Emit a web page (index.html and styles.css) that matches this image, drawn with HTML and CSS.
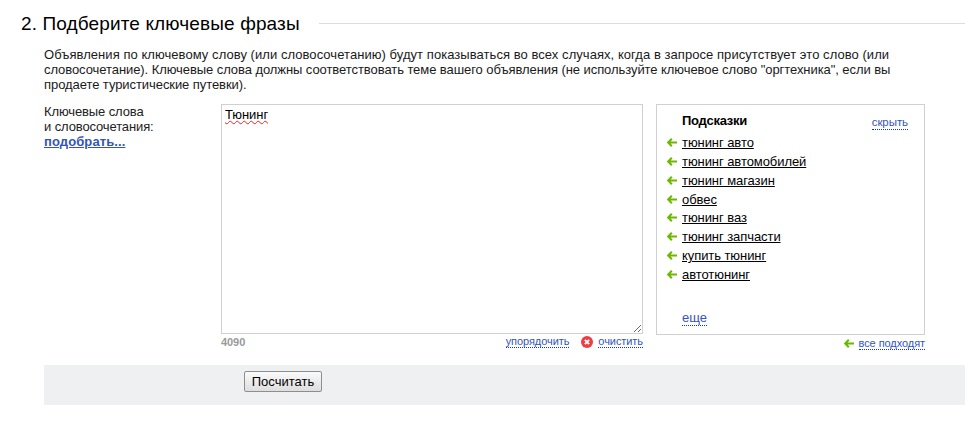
FILE: index.html
```html
<!DOCTYPE html>
<html lang="ru">
<head>
<meta charset="utf-8">
<title>Подберите ключевые фразы</title>
<link rel="stylesheet" href="styles.css">
</head>
<body>
<section class="step">
  <header class="step-head">
    <h2 class="step-title">2. Подберите ключевые фразы</h2>
    <div class="step-rule"></div>
  </header>
  <p class="step-desc"><span class="line-wide">Объявления по ключевому слову (или словосочетанию) будут показываться во всех случаях, когда в запросе присутствует это слово (или</span><br>словосочетание). Ключевые слова должны соответствовать теме вашего объявления (не используйте ключевое слово "оргтехника", если вы<br>продаете туристические путевки).</p>
  <div class="form-row">
    <div class="kw-label">Ключевые слова<br>и словосочетания:<br><a class="pick" href="#">подобрать...</a></div>
    <div class="kw-col">
      <div class="kw-input" contenteditable="true" spellcheck="false"><span class="misspelled">Тюнинг</span></div>
      <div class="kw-foot">
        <span class="counter">4090</span>
        <span class="kw-actions">
          <a class="dotted" href="#">упорядочить</a>
          <svg class="clear-icon" viewBox="0 0 12 12" width="12" height="12" aria-hidden="true"><circle cx="6" cy="6" r="6" fill="#ee3d43"/><path d="M3.9 3.9l4.2 4.2M8.1 3.9l-4.2 4.2" stroke="#fff" stroke-width="2" fill="none"/></svg>
          <a class="dotted" href="#">очистить</a>
        </span>
      </div>
    </div>
    <div class="hint-col">
      <aside class="hints">
        <div class="hints-head"><b class="hints-title">Подсказки</b><a class="dotted" href="#">скрыть</a></div>
        <ul class="hint-list">
          <li><svg class="arrow" viewBox="0 0 10 9" width="10" height="9" aria-hidden="true"><path d="M4.8 .7L1.2 4.5l3.6 3.8M1.5 4.5H10" stroke="#6cb800" stroke-width="2" fill="none"/></svg><a href="#">тюнинг авто</a></li>
          <li><svg class="arrow" viewBox="0 0 10 9" width="10" height="9" aria-hidden="true"><path d="M4.8 .7L1.2 4.5l3.6 3.8M1.5 4.5H10" stroke="#6cb800" stroke-width="2" fill="none"/></svg><a href="#">тюнинг автомобилей</a></li>
          <li><svg class="arrow" viewBox="0 0 10 9" width="10" height="9" aria-hidden="true"><path d="M4.8 .7L1.2 4.5l3.6 3.8M1.5 4.5H10" stroke="#6cb800" stroke-width="2" fill="none"/></svg><a href="#">тюнинг магазин</a></li>
          <li><svg class="arrow" viewBox="0 0 10 9" width="10" height="9" aria-hidden="true"><path d="M4.8 .7L1.2 4.5l3.6 3.8M1.5 4.5H10" stroke="#6cb800" stroke-width="2" fill="none"/></svg><a href="#">обвес</a></li>
          <li><svg class="arrow" viewBox="0 0 10 9" width="10" height="9" aria-hidden="true"><path d="M4.8 .7L1.2 4.5l3.6 3.8M1.5 4.5H10" stroke="#6cb800" stroke-width="2" fill="none"/></svg><a href="#">тюнинг ваз</a></li>
          <li><svg class="arrow" viewBox="0 0 10 9" width="10" height="9" aria-hidden="true"><path d="M4.8 .7L1.2 4.5l3.6 3.8M1.5 4.5H10" stroke="#6cb800" stroke-width="2" fill="none"/></svg><a href="#">тюнинг запчасти</a></li>
          <li><svg class="arrow" viewBox="0 0 10 9" width="10" height="9" aria-hidden="true"><path d="M4.8 .7L1.2 4.5l3.6 3.8M1.5 4.5H10" stroke="#6cb800" stroke-width="2" fill="none"/></svg><a href="#">купить тюнинг</a></li>
          <li><svg class="arrow" viewBox="0 0 10 9" width="10" height="9" aria-hidden="true"><path d="M4.8 .7L1.2 4.5l3.6 3.8M1.5 4.5H10" stroke="#6cb800" stroke-width="2" fill="none"/></svg><a href="#">автотюнинг</a></li>
        </ul>
        <a class="dotted more" href="#">еще</a>
      </aside>
      <div class="hint-foot">
        <svg class="arrow" viewBox="0 0 10 9" width="10" height="9" aria-hidden="true"><path d="M4.8 .7L1.2 4.5l3.6 3.8M1.5 4.5H10" stroke="#6cb800" stroke-width="2" fill="none"/></svg>
        <a class="dotted" href="#">все подходят</a>
      </div>
    </div>
  </div>
  <div class="submit-bar"><button class="calc" type="button">Посчитать</button></div>
</section>
</body>
</html>
```
FILE: styles.css
```css
html, body {
  margin: 0;
  padding: 0;
  background: #fff;
}
body {
  font-family: "Liberation Sans", Arial, sans-serif;
  font-size: 13px;
  line-height: 15px;
  letter-spacing: -0.07px;
  color: #000;
  overflow: hidden;
}
a { color: inherit; }
.step { padding-top: 13px; }
.step-head {
  display: flex;
  align-items: center;
  gap: 19px;
  padding-left: 21px;
  height: 21px;
}
.step-title {
  margin: 0;
  font-size: 19px;
  line-height: 21px;
  font-weight: normal;
  letter-spacing: 0.13px;
  white-space: nowrap;
}
.step-rule {
  flex: 1;
  height: 1px;
  background: #dcdcdc;
}
.step-desc {
  margin: 13px 0 0 44px;
  color: #1a1a1a;
  white-space: nowrap;
}
.line-wide { letter-spacing: 0.055px; }
.form-row {
  display: flex;
  margin: 12px 0 0 44px;
}
.kw-label {
  width: 177px;
  color: #222;
  letter-spacing: -0.12px;
}
.pick {
  color: #3355bb;
  font-weight: bold;
  letter-spacing: 0.1px;
}
.kw-col { width: 422px; }
.kw-input {
  box-sizing: border-box;
  width: 422px;
  height: 230px;
  padding: 2px 3px;
  border: 1px solid #d0d0d0;
  font-size: 13px;
  line-height: 15px;
  outline: none;
  resize: both;
  overflow: auto;
}
.misspelled {
  text-decoration: underline wavy #ee2222 1px;
  text-underline-offset: 1px;
}
.kw-foot {
  display: flex;
  justify-content: space-between;
  height: 15px;
  font-size: 11px;
  line-height: 13px;
  padding-top: 1px;
}
.counter {
  color: #999;
  font-weight: bold;
  padding-top: 1px;
}
.kw-actions {
  display: flex;
  align-items: flex-start;
}
.clear-icon { margin: 1px 5px 0 12px; }
.dotted {
  color: #3355bb;
  text-decoration: none;
  border-bottom: 1px dotted #1133cc;
}
.kw-actions .dotted, .hint-foot .dotted { font-size: 11px; line-height: 12px; }
.hint-col {
  width: 269px;
  margin-left: 13px;
}
.hints {
  box-sizing: border-box;
  height: 231px;
  padding: 8px 16px 0 9px;
  border: 1px solid #d0d0d0;
}
.hints-head {
  display: flex;
  justify-content: space-between;
  align-items: flex-start;
  padding-left: 16px;
  height: 20.4px;
}
.hints-head .dotted { font-size: 11.5px; line-height: 13px; margin-top: 3px; }
.hints-title { font-size: 13px; line-height: 15px; letter-spacing: -0.25px; }
.hint-list {
  list-style: none;
  margin: 0;
  padding: 0;
}
.hint-list li {
  display: flex;
  align-items: center;
  height: 18.8px;
  padding-left: 1px;
}
.hint-list a { text-decoration: underline; }
.arrow { margin-right: 5px; flex: none; }
.more {
  display: inline-block;
  margin: 27.6px 0 0 16px;
  font-size: 13px;
  line-height: 14px;
}
.hint-foot {
  display: flex;
  justify-content: flex-end;
  align-items: center;
  height: 16px;
}
.submit-bar {
  margin: 14px 0 0 44px;
  height: 40px;
  padding: 6px 0 0 200px;
  box-sizing: border-box;
  background: #eff0f2;
}
.calc {
  width: 78px;
  height: 21px;
  padding: 0;
  font-family: "Liberation Sans", Arial, sans-serif;
  font-size: 13px;
  color: #000;
  border: 1px solid #8e8e8e;
  border-radius: 2px;
  background: linear-gradient(#fafafa, #dedede);
}
```
